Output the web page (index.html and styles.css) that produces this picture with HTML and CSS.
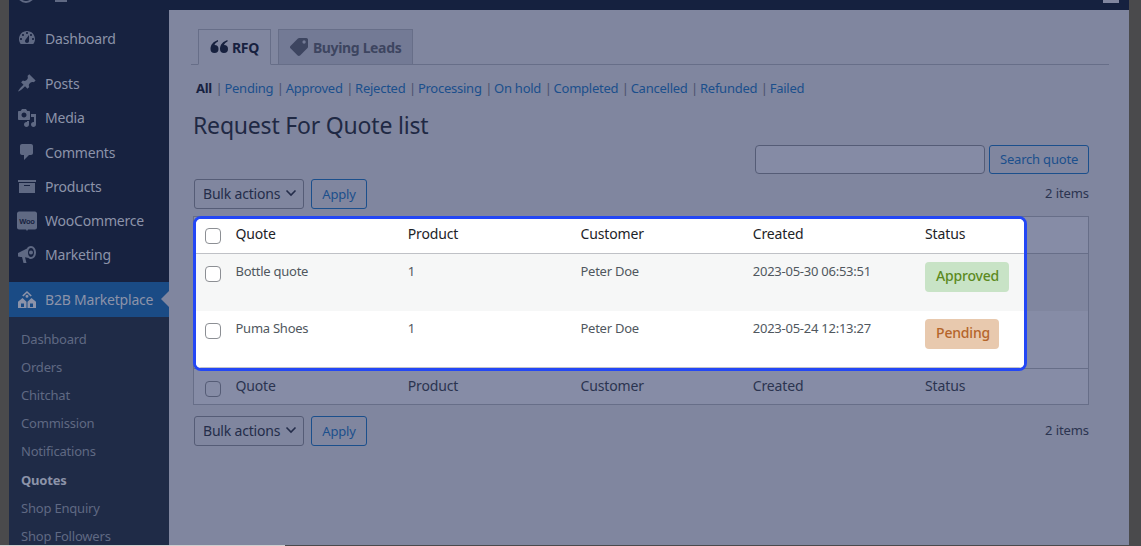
FILE: index.html
```html
<!DOCTYPE html>
<html lang="en">
<head>
<meta charset="utf-8">
<title>Request For Quote list</title>
<link rel="stylesheet" href="styles.css">
</head>
<body>
<div class="frame">
  <header class="topbar">
    <span class="wp-logo"></span>
    <span class="home-icon"></span>
    <span class="avatar"></span>
  </header>
  <div class="columns">
    <nav class="sidebar">
      <a class="menu-item first"><svg class="mi" viewBox="0 0 20 20"><path d="M3.76 16h12.48c1.1-1.37 1.76-3.11 1.76-5 0-4.42-3.58-8-8-8s-8 3.58-8 8c0 1.89.66 3.63 1.76 5zM10 4c.55 0 1 .45 1 1s-.45 1-1 1-1-.45-1-1 .45-1 1-1zM6 6c.55 0 1 .45 1 1s-.45 1-1 1-1-.45-1-1 .45-1 1-1zm8 0c.55 0 1 .45 1 1s-.45 1-1 1-1-.45-1-1 .45-1 1-1zm-5.37 5.55L12 7v6c0 1.1-.9 2-2 2s-2-.9-2-2c0-.57.24-1.08.63-1.45zM4 10c.55 0 1 .45 1 1s-.45 1-1 1-1-.45-1-1 .45-1 1-1zm12 0c.55 0 1 .45 1 1s-.45 1-1 1-1-.45-1-1 .45-1 1-1z"/></svg>Dashboard</a>
      <a class="menu-item gap"><svg class="mi" viewBox="0 0 20 20"><path d="M10.44 3.02l1.82-1.82 6.36 6.35-1.83 1.82c-1.05-.68-2.48-.57-3.41.36l-.75.75c-.92.93-1.04 2.35-.35 3.41l-1.83 1.82-2.41-2.41-2.8 2.79c-.42.42-3.38 2.71-3.8 2.29s1.86-3.39 2.28-3.81l2.79-2.79L4.1 9.36l1.83-1.82c1.05.69 2.48.57 3.4-.36l.75-.75c.93-.92 1.05-2.35.36-3.41z"/></svg>Posts</a>
      <a class="menu-item"><svg class="mi" viewBox="0 0 20 20"><path fill-rule="evenodd" d="M13 11V4c0-.55-.45-1-1-1h-1.67L9 1H5L3.67 3H2c-.55 0-1 .45-1 1v7c0 .55.45 1 1 1h10c.55 0 1-.45 1-1zM7 4.500c1.38 0 2.500 1.120 2.500 2.500S8.380 9.500 7 9.500 4.500 8.380 4.500 7 5.620 4.500 7 4.500zM14 6h5v10.500c0 1.380-1.120 2.500-2.500 2.500S14 17.880 14 16.500s1.120-2.500 2.500-2.500c.17 0 .34.02.5.05V9h-3V6zm-4 8.050V13h2v3.500c0 1.380-1.120 2.500-2.500 2.500S7 17.880 7 16.500 8.120 14 9.500 14c.17 0 .34.02.5.05z"/></svg>Media</a>
      <a class="menu-item"><svg class="mi" viewBox="0 0 20 20"><path d="M5 2h9c1.100 0 2 .9 2 2v7c0 1.100-.9 2-2 2h-2l-5 5v-5H5c-1.100 0-2-.9-2-2V4c0-1.100.9-2 2-2z"/></svg>Comments</a>
      <a class="menu-item"><svg class="mi" viewBox="0 0 20 20"><path fill-rule="evenodd" d="M19 4v2H1V4h18zM2 7h16v10H2V7zm11 3V9H7v1h6z"/></svg>Products</a>
      <a class="menu-item"><svg class="mi" viewBox="0 0 20 20"><path d="M2 0.500h16c1 0 2 1 2 2v14c0 1-1 2-2 2h-7l-1 1.500-1-1.500H2c-1 0-2-1-2-2v-14c0-1 1-2 2-2z"/><text class="woo" x="10" y="12.500" text-anchor="middle">Woo</text></svg>WooCommerce</a>
      <a class="menu-item"><svg class="mi" viewBox="0 0 20 20"><path fill-rule="evenodd" d="M1 8l9-4.500C10.500 2 12 1 14 1c3 0 5 3 5 6.500S17 14 14 14c-1 0-2-.3-2.500-1L8 12.300 9.500 18H6.500L5 12H3.500L1 11.500V8zM14 3c-1.800 0-3 2-3 4.500S12.200 12 14 12s3-2 3-4.500S15.800 3 14 3zm0 2.500a2 2 0 1 1 0 4 2 2 0 0 1 0-4z"/></svg>Marketing</a>
      <a class="menu-item active"><svg class="mi" viewBox="0 0 20 20"><path fill-rule="evenodd" d="M10 1l4.800 4.500-1.200.9L10 3 6.400 6.400l-1.200-.9L10 1zm0 3.800a1.500 1.500 0 1 1 0 3 1.500 1.500 0 0 1 0-3zM5.500 8l4 3.800V18H1v-6.200L5.500 8zm9 0l4.500 3.800V18h-8.500v-6.200l4-3.800zM4 13.500V17h3v-3.500H4zm9 0V17h3v-3.500h-3z"/></svg>B2B Marketplace</a>
      <ul class="submenu">
        <li>Dashboard</li>
        <li>Orders</li>
        <li>Chitchat</li>
        <li>Commission</li>
        <li>Notifications</li>
        <li class="current">Quotes</li>
        <li>Shop Enquiry</li>
        <li>Shop Followers</li>
      </ul>
    </nav>
    <main class="content">
      <div class="tabs">
        <a class="tab on"><svg class="tab-icon quote" viewBox="0 0 18 16"><path d="M8 1C3.500 2.500.5 5.500.5 10a4 4 0 1 0 4-4c.5-1.500 1.700-2.600 3.500-3.500zM17.500 1C13 2.500 10 5.500 10 10a4 4 0 1 0 4-4c.5-1.500 1.700-2.600 3.500-3.500z"/></svg>RFQ</a>
        <a class="tab"><svg class="tab-icon tag" viewBox="0 0 512 512"><path d="M0 252.100V48C0 21.500 21.500 0 48 0h204.100a48 48 0 0 1 33.900 14.100l211.900 211.900c18.700 18.700 18.700 49.100 0 67.900L293.800 497.900c-18.700 18.700-49.100 18.700-67.900 0L14.100 286.100A48 48 0 0 1 0 252.100zM112 64a48 48 0 1 0 0 96 48 48 0 0 0 0-96z"/></svg>Buying Leads</a>
      </div>
      <ul class="filters">
        <li class="all">All</li>
        <li><a>Pending</a></li>
        <li><a>Approved</a></li>
        <li><a>Rejected</a></li>
        <li><a>Processing</a></li>
        <li><a>On hold</a></li>
        <li><a>Completed</a></li>
        <li><a>Cancelled</a></li>
        <li><a>Refunded</a></li>
        <li><a>Failed</a></li>
      </ul>
      <h1 class="title">Request For Quote list</h1>
      <div class="search">
        <input class="search-input" type="text" aria-label="Search">
        <button class="btn search-btn">Search quote</button>
      </div>
      <div class="tablenav top">
        <button class="select">Bulk actions<svg class="chev" viewBox="0 0 12 8"><path d="M1.500 1.500L6 6l4.500-4.500"/></svg></button>
        <button class="btn apply">Apply</button>
        <span class="count">2 items</span>
      </div>
      <div class="table-wrap">
        <div class="table">
          <div class="row head"></div>
          <div class="row body alt"></div>
          <div class="row body"></div>
          <div class="row foot cols">
            <span class="cb"></span><span>Quote</span><span>Product</span><span>Customer</span><span>Created</span><span>Status</span>
          </div>
        </div>
        <div class="spotlight">
          <div class="row head cols">
            <span class="cb"></span><span>Quote</span><span>Product</span><span>Customer</span><span>Created</span><span>Status</span>
          </div>
          <div class="row body alt cols">
            <span class="cb"></span><span>Bottle quote</span><span>1</span><span>Peter Doe</span><span>2023-05-30 06:53:51</span><span><b class="badge ok">Approved</b></span>
          </div>
          <div class="row body cols">
            <span class="cb"></span><span>Puma Shoes</span><span>1</span><span>Peter Doe</span><span>2023-05-24 12:13:27</span><span><b class="badge wait">Pending</b></span>
          </div>
        </div>
      </div>
      <div class="tablenav bottom">
        <button class="select">Bulk actions<svg class="chev" viewBox="0 0 12 8"><path d="M1.500 1.500L6 6l4.500-4.500"/></svg></button>
        <button class="btn apply">Apply</button>
        <span class="count">2 items</span>
      </div>
    </main>
  </div>
</div>
<div class="edge"></div>
</body>
</html>
```
FILE: styles.css
```css
* { box-sizing: border-box; }
html, body { margin: 0; height: 100%; }
body {
  width: 1141px;
  height: 546px;
  overflow: hidden;
  background: #4a4a4c;
  font-family: "Noto Sans", "Liberation Sans", sans-serif;
  font-size: 13px;
}
.frame { margin-left: 9px; width: 1120px; height: 545px; display: flex; flex-direction: column; overflow: hidden; }
.edge { width: 285px; height: 1px; background: #cfcfcf; }
.topbar { height: 10px; flex: none; background: #15213f; display: flex; overflow: hidden; }
.wp-logo { width: 18px; height: 18px; margin: -15px 0 0 8px; border: 2px solid #5f6983; border-radius: 50%; flex: none; }
.home-icon { width: 12px; height: 12px; margin: -10px 0 0 20px; background: #5f6983; flex: none; }
.avatar { width: 16px; height: 16px; margin: -13px 0 0 1036px; background: #80869f; flex: none; }
.columns { flex: 1; display: flex; min-height: 0; }
.sidebar { width: 160px; flex: none; background: #172240; color: #8c93a9; padding-top: 11px; overflow: hidden; }
.menu-item { display: flex; align-items: center; height: 34.3px; font-size: 14px; letter-spacing: -.2px; padding-left: 8px; }
.menu-item.gap { margin-top: 11px; }
.mi { width: 20px; height: 20px; margin-right: 8px; fill: #5f6983; flex: none; }
.woo { font-size: 7.500px; font-weight: 700; fill: #172240; font-family: "Liberation Sans", sans-serif; }
.menu-item.active { position: relative; height: 35px; margin-top: 10px; background: #1a4b85; }
.menu-item.active::after { content: ""; position: absolute; right: 0; top: 9px; border: 8px solid transparent; border-right-color: #80869f; border-left-width: 0; }
.menu-item.active .mi { fill: #8c93a9; }
.submenu { list-style: none; margin: 0; padding: 8px 0 0; background: #1f2b47; height: 240px; }
.submenu li { height: 28.100px; line-height: 28px; padding-left: 12px; font-size: 13px; letter-spacing: -.2px; color: #5f6983; }
.submenu li.current { color: #8c93a9; font-weight: 700; }
.content { flex: 1; background: #80869f; padding: 19px 40px 0 24px; min-width: 0; position: relative; }
.tabs { display: flex; gap: 7px; height: 36px; border-bottom: 1px solid #676e88; margin: 0 -20px 0 -2px; padding-left: 7px; }
.tab { display: flex; align-items: center; height: 36px; padding: 0 11px; border: 1px solid #676e88; font-weight: 700; font-size: 14px; letter-spacing: -.35px; background: #737a95; color: #3d4560; }
.tab.on { background: #80869f; border-bottom-color: #80869f; color: #17213f; }
.tab-icon { width: 18px; height: 18px; margin-right: 4px; }
.tab-icon.quote { fill: #17213f; }
.tab-icon.tag { fill: #3d4560; transform: scaleX(-1); margin-right: 5px; }
.filters { list-style: none; display: flex; margin: 14px 0 0; padding: 0 0 0 3px; font-size: 13px; letter-spacing: -.25px; height: 18px; line-height: 18px; color: #1b4f8c; }
.filters li + li::before { content: "|"; color: #4a516d; margin: 0 2px 0 3.500px; }
.filters .all { font-weight: 700; color: #17213f; }
.title { margin: 13px 0 0; font-size: 23px; line-height: 30px; font-weight: 400; color: #1f2944; letter-spacing: -.2px; }
.search { display: flex; justify-content: flex-end; gap: 4px; margin-top: 5px; height: 29px; }
.search-input { width: 230px; height: 29px; background: #858ba5; border: 1px solid #555c76; border-radius: 4px; padding: 0; }
.btn { height: 30px; padding: 0; background: #80869f; border: 1px solid #1b4f8c; border-radius: 3px; color: #1b4f8c; font: inherit; letter-spacing: -.2px; }
.search-btn { width: 100px; height: 29px; padding-bottom: 1px; }
.tablenav { display: flex; align-items: center; gap: 7px; height: 30px; padding-left: 1px; }
.tablenav.top { margin-top: 5px; }
.tablenav.bottom { margin-top: 11px; }
.select { display: flex; align-items: center; justify-content: space-between; width: 110px; height: 30px; padding: 0 6px 2px 8px; background: #80869f; border: 1px solid #555c76; border-radius: 3px; color: #242d4a; font: inherit; font-size: 14px; letter-spacing: -.2px; }
.chev { width: 12px; height: 8px; fill: none; stroke: #242d4a; stroke-width: 1.600; }
.apply { width: 56px; }
.count { margin-left: auto; padding-bottom: 2px; color: #2b3450; letter-spacing: -.1px; }
.table-wrap { position: relative; margin-top: 7px; }
.table { width: 896px; border: 1px solid #676e88; background: #868ca6; }
.row { height: 57px; }
.row.head { height: 37px; border-bottom: 1px solid #676e88; }
.row.foot { height: 36px; border-top: 1px solid #676e88; }
.row.alt { background: #80869f; }
.cols { display: grid; grid-template-columns: 41.500px 172.300px 172.700px 172.300px 172.300px 1fr; padding-top: 7px; font-size: 14px; line-height: 20px; letter-spacing: -.15px; color: #2b3450; }
.cb { display: block; width: 16px; height: 16px; margin: 5px 0 0 11px; border: 1px solid #555c76; border-radius: 4px; }
.spotlight { position: absolute; left: 0; top: 0; width: 834px; height: 155px; background: #fff; border: 3px solid #2347f5; border-radius: 8px; overflow: hidden; }
.spotlight .row { width: calc(100% + 2px); margin-left: -2px; }
.spotlight .row.head { height: 35px; border-bottom: 1px solid #bfc1c6; color: #1d2327; padding-top: 5px; background: #fff; }
.spotlight .row.body { font-size: 13px; letter-spacing: -.25px; color: #50575e; background: #fff; padding-top: 7px; height: 57px; }
.spotlight .row.alt { background: #f6f7f7; }
.spotlight .row:last-child { border-bottom: 1px solid #c3c4c7; }
.spotlight .cb { border-color: #8c8f94; background: #fff; margin-top: 4px; }
.spotlight .row.body .cb { margin-top: 5px; }
.badge { display: block; width: max-content; margin-top: 1px; height: 30px; line-height: 28px; padding: 0 10px 0 11px; border-radius: 4px; font-size: 14px; font-weight: 500; letter-spacing: -.2px; }
.badge.ok { background: #c8e3c6; color: #5c8a1e; }
.badge.wait { background: #e8c9ae; color: #b5652b; padding-right: 9px; }
```
